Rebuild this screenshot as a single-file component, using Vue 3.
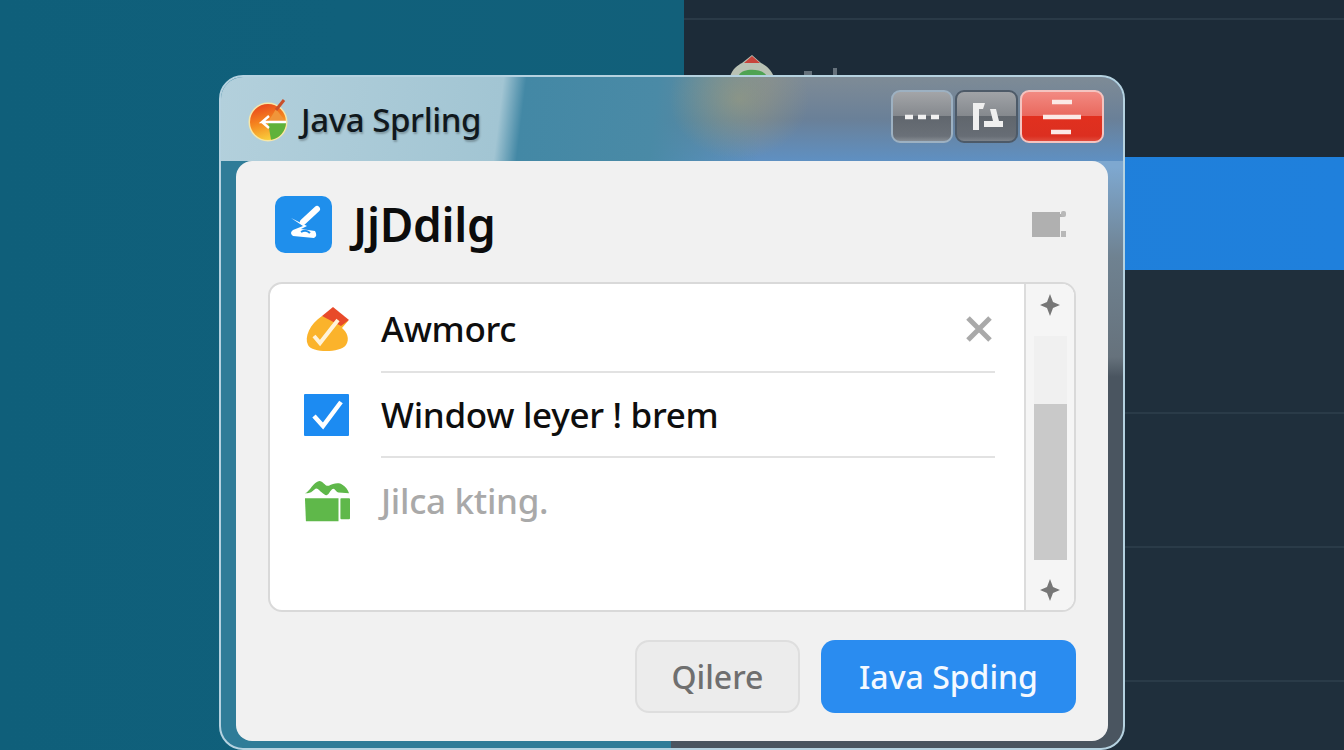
<template>
  <div class="desktop">
    <div class="pane-left"></div>
    <div class="pane-right">
      <div class="dk-top"></div>
      <div class="dk-band"></div>
      <div class="dk-row first"></div>
      <div class="dk-row"></div>
      <div class="dk-row"></div>
    </div>

    <!-- 窗口后面露出的图标 -->
    <svg class="ghost-logo" width="110" height="24" viewBox="0 0 110 24">
      <path d="M2 24 C4 16 10 12 14 10 L24 2 L33 10 C39 13 44 18 46 24 Z" fill="#b9c2b4" />
      <path d="M16 10 L24 3 L32 10 Z" fill="#c8453c" />
      <path d="M11 22 C14 15 34 15 38 22 Z" fill="#4fa353" />
      <rect x="76" y="18" width="8" height="6" fill="#66727c" />
      <rect x="105" y="15" width="4" height="9" fill="#66727c" />
    </svg>

    <div class="window">
      <div class="titlebar">
        <svg class="app-logo" width="44" height="44" viewBox="0 0 44 44">
          <defs>
            <linearGradient id="lg" x1="0.2" y1="0" x2="0.5" y2="1">
              <stop offset="0" stop-color="#e8431c" />
              <stop offset="0.5" stop-color="#f5851f" />
              <stop offset="1" stop-color="#f9cf3c" />
            </linearGradient>
          </defs>
          <circle cx="21" cy="23" r="19.5" fill="#f7e7a8" />
          <circle cx="21" cy="23" r="18" fill="url(#lg)" />
          <path d="M21 23 L39 23 A18 18 0 0 1 24 40.8 Z" fill="#5fb23a" />
          <path d="M21 23 L29 10 L39 23 Z" fill="#f0953a" />
          <path d="M29 11 L37 1" stroke="#c9502a" stroke-width="3" />
          <path d="M39 23 L15 23 L22 17 M15 23 L22 29" fill="none" stroke="#fff" stroke-width="2.4" />
        </svg>
        <span class="app-name">Java Sprling</span>
        <div class="controls">
          <button class="ctl ctl-min">
            <svg width="34" height="8" viewBox="0 0 34 8"><path d="M0 4H8M13 4H21M26 4H34" stroke="#f1f1f1" stroke-width="4.5" /></svg>
          </button>
          <button class="ctl ctl-max">
            <svg width="34" height="32" viewBox="0 0 34 32"><path d="M3 2 H15 L13 8 H9 V29 H3 Z M20 8 H26 L29 20 H33 V26 H14 V20 H23 Z" fill="#efefef" /></svg>
          </button>
          <button class="ctl ctl-close">
            <svg width="38" height="36" viewBox="0 0 38 36"><path d="M9 3H29M0 18H38M8 33H28" stroke="#fbe9e6" stroke-width="4.5" /></svg>
          </button>
        </div>
      </div>

      <div class="panel">
        <div class="panel-head">
          <div class="head-icon">
            <svg width="40" height="40" viewBox="0 0 40 40">
              <path d="M33 5 L19 18" stroke="#fff" stroke-width="6" stroke-linecap="round" />
              <path d="M7 14 L23 22 L17 25 L31 27 Q34 32 30 34 L9 32 Q5 29 9 26 L19 22 Z" fill="#fff" />
              <path d="M17 28 Q22 25 26 29" stroke="#1f8fec" stroke-width="2" fill="none" />
            </svg>
          </div>
          <h1>JjDdilg</h1>
          <svg class="head-side" width="35" height="26" viewBox="0 0 35 26">
            <rect x="0" y="1" width="28" height="25" fill="#b0b0b0" />
            <rect x="28" y="3" width="4" height="3" fill="#b0b0b0" />
            <rect x="29" y="0" width="5" height="6" rx="2" fill="#b8b8b8" />
            <rect x="29" y="20" width="5" height="6" fill="#b8b8b8" />
          </svg>
        </div>

        <div class="list-box">
          <div class="list">
            <div class="row" v-for="item in items" :key="item.name" :class="item.cls">
              <span class="row-icon">
                <svg v-if="item.cls === 'orange'" width="46" height="46" viewBox="0 0 46 46">
                  <path d="M18 9 C6 17 0 30 4 38 C8 46 36 46 42 38 C46 32 43 25 38 21 L44 14 Z" fill="#fbb32b" />
                  <path d="M18 9 L29 0 L45 13 L37 19 Z" fill="#e84a2a" />
                  <path d="M10 29 L16 36 L34 13" fill="none" stroke="#fff3d9" stroke-width="4" />
                </svg>
                <svg v-else-if="item.cls === 'blue'" width="46" height="44" viewBox="0 0 46 44">
                  <rect width="45" height="42" y="1" rx="1" fill="#1c8bf2" />
                  <path d="M10 23 L19 33 L37 9" fill="none" stroke="#fff" stroke-width="4.5" />
                </svg>
                <svg v-else width="48" height="42" viewBox="0 0 48 42">
                  <path d="M1 13 C6 11 10 1 16 0 C20 0 22 6 26 5 C30 3 36 1 40 4 C43 6 46 9 47 13 L36 12 C33 12 32 6 29 9 C26 12 25 17 21 14 C16 11 14 6 11 9 C8 11 8 13 1 13 Z" fill="#5fb84a" />
                  <path d="M1 18 H36 V42 H2 Z" fill="#5fb84a" />
                  <rect x="38" y="18" width="10" height="22" rx="1" fill="#5fb84a" />
                </svg>
              </span>
              <div class="row-body">
                <span class="row-text">{{ item.name }}</span>
                <svg v-if="item.cls === 'orange'" class="row-x" width="30" height="30" viewBox="0 0 30 30">
                  <path d="M4 4 L26 26 M26 4 L4 26" stroke="#a9a9a9" stroke-width="5" />
                </svg>
              </div>
            </div>
          </div>
          <div class="scroll">
            <svg width="22" height="24" viewBox="0 0 22 24"><path d="M11 1 L14 9 L21 12 L14 15 L11 23 L8 15 L1 12 L8 9 Z" fill="#777" /></svg>
            <div class="track"><div class="thumb"></div></div>
            <svg width="22" height="24" viewBox="0 0 22 24"><path d="M11 1 L14 9 L21 12 L14 15 L11 23 L8 15 L1 12 L8 9 Z" fill="#777" /></svg>
          </div>
        </div>

        <div class="panel-foot">
          <button class="btn btn-cancel">Qilere</button>
          <button class="btn btn-primary">Iava Spding</button>
        </div>
      </div>
    </div>
  </div>
</template>

<script setup>
const items = [
  { name: 'Awmorc', cls: 'orange' },
  { name: 'Window leyer ! brem', cls: 'blue' },
  { name: 'Jilca kting.', cls: 'green' }
]
</script>

<style>
html, body {
  margin: 0;
  overflow: hidden;
}
</style>

<style scoped>
.desktop {
  position: relative;
  width: 1344px;
  height: 750px;
  display: flex;
  overflow: hidden;
  font-family: "Noto Sans", "Open Sans", sans-serif;
}

.pane-left {
  width: 684px;
  background: linear-gradient(90deg, #0f5f7a 0%, #10607b 50%, #12607a 100%);
}

.pane-right {
  flex: 1;
  background: #1f2f3c;
  display: flex;
  flex-direction: column;
}

.dk-top {
  height: 157px;
  background: linear-gradient(#1d2c39 18px, #2a3a47 18px, #2a3a47 20px, #1c2b38 20px);
}

.dk-band {
  height: 113px;
  background: linear-gradient(90deg, #1f7fd8 0, #1f80dc 100%);
}

.dk-row {
  height: 134px;
  box-sizing: border-box;
  border-bottom: 2px solid #2a3b48;
}

.dk-row.first {
  height: 144px;
}

.ghost-logo {
  position: absolute;
  left: 728px;
  top: 53px;
}

/* 窗口 */
.window {
  position: absolute;
  left: 219px;
  top: 75px;
  width: 906px;
  height: 675px;
  box-sizing: border-box;
  padding: 0 15px 7px;
  border: 2px solid #b5d2e0;
  border-radius: 24px;
  display: flex;
  flex-direction: column;
  background:
    linear-gradient(#7ea8d0 90px, #6f8291 180px, #66727c 280px, #4a5560 300px) right / 452px 100% no-repeat,
    #2f7c98;
}

.titlebar {
  height: 84px;
  margin: 0 -15px;
  padding: 0 19px 0 26px;
  display: flex;
  align-items: center;
  border-radius: 22px 22px 0 0;
  background:
    radial-gradient(ellipse 70px 60px at 518px 22px, rgba(165, 160, 120, 0.55), rgba(165, 160, 120, 0)),
    linear-gradient(97deg, #b3d0dc 0, #a2c5d3 31%, #4388a5 33.5%, #4a8aa6 48%, rgba(90, 130, 160, 0) 60%),
    linear-gradient(#7e8b96 0, #6a8098 50%, #5f90c2 100%);
}

.app-logo {
  margin-top: 4px;
}

.app-name {
  margin-left: 10px;
  font-size: 33px;
  font-weight: 500;
  color: #10181d;
  letter-spacing: -0.4px;
  text-shadow: 1px 2px 2px rgba(0, 0, 0, 0.25);
}

.controls {
  margin-left: auto;
  display: flex;
  gap: 2px;
  align-self: flex-start;
  margin-top: 13px;
}

.ctl {
  height: 53px;
  padding: 0;
  border-radius: 9px;
  display: flex;
  align-items: center;
  justify-content: center;
  box-sizing: border-box;
}

.ctl-min {
  width: 62px;
  border: 2px solid #9db1c2;
  background: linear-gradient(#a3a5a8 0, #84888d 50%, #60666d 50%, #6a7078 90%, #858b92 100%);
}

.ctl-max {
  width: 63px;
  border: 2px solid #4d5a68;
  background: linear-gradient(#a0a3a7 0, #84888d 50%, #60666d 50%, #676d75 90%, #7d838a 100%);
}

.ctl-close {
  width: 84px;
  border: 2px solid #f4c4c0;
  background: linear-gradient(#f28a82 0, #e9675c 50%, #e1301f 50%, #dc2f20 90%, #e04a3c 100%);
}

.panel {
  flex: 1;
  min-height: 0;
  box-sizing: border-box;
  padding: 35px 32px 28px;
  border-radius: 16px;
  background: #f1f1f1;
  display: flex;
  flex-direction: column;
}

.panel-head {
  height: 56px;
  flex: none;
  display: flex;
  align-items: center;
  padding-left: 7px;
  gap: 21px;
}

.head-icon {
  width: 57px;
  height: 57px;
  border-radius: 10px;
  background: #1f8fec;
  display: flex;
  align-items: center;
  justify-content: center;
}

.panel-head h1 {
  margin: 0;
  font-size: 46px;
  font-weight: 600;
  color: #0c0c0c;
  letter-spacing: -0.3px;
}

.head-side {
  margin-left: auto;
  margin-right: 9px;
}

/* 列表 */
.list-box {
  margin-top: 30px;
  height: 330px;
  flex: none;
  box-sizing: border-box;
  display: flex;
  border: 2px solid #d9d9d9;
  border-radius: 14px;
  background: #fff;
  overflow: hidden;
}

.list {
  flex: 1;
  padding-top: 3px;
}

.row {
  height: 85.5px;
  display: flex;
  align-items: center;
  padding-left: 34px;
  gap: 31px;
}

.row-icon {
  width: 46px;
  display: flex;
  justify-content: center;
}

.row-body {
  flex: 1;
  height: 100%;
  margin-right: 29px;
  padding-right: 1px;
  box-sizing: border-box;
  border-bottom: 2px solid #e2e2e2;
  display: flex;
  align-items: center;
  justify-content: space-between;
}

.row.green .row-body {
  border-bottom: none;
}

.row-text {
  font-size: 35px;
  font-weight: 500;
  color: #0e0e0e;
  letter-spacing: -0.3px;
}

.row.green .row-text {
  color: #a9a9a9;
}

.scroll {
  width: 50px;
  box-sizing: border-box;
  border-left: 2px solid #dcdcdc;
  background: #f5f5f5;
  padding: 9px 0 8px;
  display: flex;
  flex-direction: column;
  align-items: center;
  justify-content: space-between;
}

.track {
  width: 33px;
  height: 224px;
  background: #f0f0f0;
  display: flex;
  flex-direction: column;
  justify-content: flex-end;
}

.thumb {
  height: 156px;
  background: #c9c9c9;
}

/* 底部按钮 */
.panel-foot {
  margin-top: 28px;
  display: flex;
  justify-content: flex-end;
  gap: 21px;
}

.btn {
  height: 73px;
  box-sizing: border-box;
  border-radius: 14px;
  font-family: inherit;
  font-size: 32px;
  font-weight: 500;
}

.btn-cancel {
  width: 165px;
  border: 2px solid #dedede;
  background: #ececec;
  color: #6f6f6f;
}

.btn-primary {
  width: 255px;
  border: none;
  background: #2a8cf0;
  color: #f4f9ff;
}
</style>
